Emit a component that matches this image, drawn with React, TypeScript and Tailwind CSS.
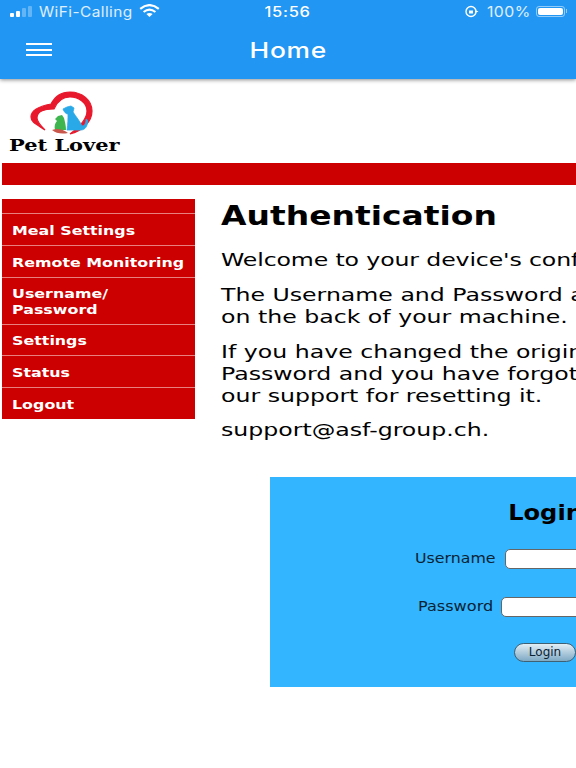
const sans = "font-['DejaVu_Sans',Verdana,sans-serif]";

const menu = [
  { lines: ["Meal Settings"], h: "h-[32px]" },
  { lines: ["Remote Monitoring"], h: "h-[32px]" },
  { lines: ["Username/", "Password"], h: "h-[47px]" },
  { lines: ["Settings"], h: "h-[31px]" },
  { lines: ["Status"], h: "h-[32px]" },
  { lines: ["Logout"], h: "h-[31px]" },
];

function Wifi() {
  return (
    <svg width="21" height="13" viewBox="0 0 21 13" className="ml-[15px] -mt-[1px]">
      <path d="M1.2 4.8 Q10.5 -2.6 19.8 4.8" fill="none" stroke="#fff" strokeWidth="2.2" />
      <path d="M4.6 8 Q10.5 3.2 16.4 8" fill="none" stroke="#fff" strokeWidth="2.2" />
      <path d="M7.4 10 Q10.5 7.8 13.6 10 L10.5 13 Z" fill="#fff" />
    </svg>
  );
}

function Logo() {
  return (
    <div className="relative w-[116px] h-[66px]">
      <svg width="116" height="52" viewBox="0 0 116 52" className="absolute left-0 top-0">
        {/* heart */}
        <path
          d="M37 40 C28 34 23 32 23 27 C23 20 32 16 43 14 C47 6 54 2 62 2 C74 2 84 10 84 21 C84 32 74 41 62 44 C70 38 79 30 79 21 C79 13 71 7 62 7 C54 7 49 12 46 19 C38 19 29 21 29 28 C29 32 33 36 37 40 Z"
          fill="#e8192c"
          stroke="#e8192c"
          strokeWidth="1.2"
        />
        {/* big dog */}
        <path
          d="M55 19 L59 17 L63 16 L66 18 L65 22 C68 27 72 31 74 36 C77 36 78 33 78 29 L79.5 30 C80 36 77 40 73 40 L59 40 C60 34 60 28 60 24 C58 24 56 22 55 19 Z"
          fill="#2aa9e8"
          stroke="#2aa9e8"
          strokeWidth="0.8"
        />
        {/* small dog */}
        <path
          d="M47 29 L50 26 L54 25 L56 28 C57 32 58 36 58 40 L47 40 C46 36 47 33 49 31 Z"
          fill="#3fb54f"
        />
        {/* paw */}
        <path d="M44 40 Q52 37 60 43 Q50 45 44 40 Z" fill="#c9574c" />
      </svg>
      <span className="absolute left-[1px] top-[45px] inline-block origin-left scale-x-[1.23] text-[17px] leading-[20px] font-bold whitespace-nowrap text-black font-['DejaVu_Serif',serif]">
        Pet Lover
      </span>
    </div>
  );
}

export default function App() {
  return (
    <div className={`w-[576px] h-[768px] overflow-hidden bg-white flex flex-col ${sans}`}>
      {/* App bar */}
      <header className="h-[79px] shrink-0 bg-[#2196f3] text-white shadow-[0_1px_4px_rgba(0,0,0,0.45)] relative z-10 flex flex-col">
        <div className="h-[22px] flex items-center justify-between pl-[10px] pr-[9px] text-[14px] font-['Inter',sans-serif]">
          <div className="flex items-center w-[198px]">
            <div className="flex items-end gap-[2px] mr-[7px] mt-[1px]">
              <span className="w-[4px] h-[4px] rounded-[1px] bg-white" />
              <span className="w-[4px] h-[6px] rounded-[1px] bg-white" />
              <span className="w-[4px] h-[9px] rounded-[1px] bg-white/30" />
              <span className="w-[4px] h-[11px] rounded-[1px] bg-white/30" />
            </div>
            <span className="inline-block origin-left scale-x-[1.1] tracking-[0.4px] text-white/85">WiFi-Calling</span>
            <Wifi />
          </div>
          <span className="inline-block scale-x-[1.18] font-medium tracking-[0.6px]">15:56</span>
          <div className="flex items-center justify-end w-[200px]">
            <svg width="15" height="13" viewBox="0 0 15 13" className="mr-[13px]">
              <circle cx="7" cy="6.5" r="5" fill="none" stroke="#fff" strokeWidth="1.4" />
              <rect x="5" y="5.5" width="4" height="3" fill="#fff" />
              <path d="M11 5 L14.5 6.5 L11 8 Z" fill="#fff" />
            </svg>
            <span className="inline-block origin-right scale-x-[1.13] tracking-[0.4px] text-white/85">100%</span>
            <div className="ml-[5px] w-[29px] h-[11px] rounded-[3px] border border-white/50 p-[1px]">
              <div className="h-full rounded-[2px] bg-white" />
            </div>
            <span className="ml-[1px] w-[1px] h-[4px] bg-white/50" />
          </div>
        </div>
        <div className="flex-1 relative flex items-center justify-center">
          <div className="absolute left-[26px] top-[21px] w-[26px] flex flex-col gap-[3.5px]">
            <span className="h-[2px] bg-white" />
            <span className="h-[2px] bg-white" />
            <span className="h-[2px] bg-white" />
          </div>
          <h1 className="inline-block scale-x-[1.2] text-[22px] font-medium tracking-[0.6px] font-['Inter',sans-serif]">Home</h1>
        </div>
      </header>

      {/* Logo */}
      <div className="h-[84px] shrink-0 pl-[8px] pt-[11px]">
        <Logo />
      </div>

      {/* Red bar */}
      <div className="ml-[2px] h-[22px] shrink-0 bg-[#cc0000]" />

      <div className="flex pt-[14px] pl-[2px]">
        {/* Sidebar */}
        <nav className="w-[193px] shrink-0 self-start flex flex-col bg-[#cc0000] text-white">
          <div className="h-[15px] border-b border-[#e88080]" />
          {menu.map((item, i) => (
            <a
              key={item.lines[0]}
              className={`${item.h} flex flex-col justify-center pl-[10px] pt-[2px] text-[12.5px] leading-[16px] font-bold whitespace-nowrap ${
                i < menu.length - 1 ? "border-b border-[#e88080]" : ""
              }`}
            >
              {item.lines.map((line) => (
                <span key={line} className="block origin-left scale-x-[1.27]">
                  {line}
                </span>
              ))}
            </a>
          ))}
        </nav>

        {/* Main */}
        <main className="ml-[26px] w-[355px] shrink-0 text-black">
          <h2 className="origin-left scale-x-[1.22] text-[27px] leading-[36px] font-bold -mt-[1px] whitespace-nowrap">Authentication</h2>
          <div className="mt-[15px] origin-left scale-x-[1.35] text-[17.5px] leading-[22px] whitespace-nowrap">
            <p className="tracking-[-0.1px]">Welcome to your device's configuration</p>
            <p className="mt-[13px]">
              The Username and Password are printed
              <br />
              on the back of your machine.
            </p>
            <p className="mt-[13px]">
              If you have changed the original
              <br />
              Password and you have forgotten, contact
              <br />
              our support for resetting it.
            </p>
            <p className="mt-[12px]">support@asf-group.ch.</p>
          </div>

          {/* Login panel */}
          <section className="mt-[36px] ml-[49px] w-[550px] h-[210px] bg-[#33b5ff] flex flex-col items-center">
            <h3 className="mt-[22px] inline-block scale-x-[1.15] text-[21px] leading-[28px] font-bold">Login</h3>
            <div className="mt-[21px] flex items-center gap-[10px]">
              <label className="w-[80px] origin-left scale-x-[1.09] text-[14.5px] text-[#0b2233] whitespace-nowrap">Username</label>
              <input className="w-[170px] h-[20px] rounded-[5px] bg-white border-[1.5px] border-[#666]" />
            </div>
            <div className="mt-[26px] flex items-center gap-[8px]">
              <label className="w-[75px] origin-left scale-x-[1.11] text-[14.5px] text-[#0b2233] whitespace-nowrap">Password</label>
              <input className="w-[171px] h-[20px] rounded-[5px] bg-white border-[1.5px] border-[#666]" />
            </div>
            <button className="mt-[25px] w-[62px] h-[19px] rounded-full border border-[#3f5f73] bg-gradient-to-b from-[#e3eef5] to-[#7fa9c4] text-[12px] leading-[16px] text-[#0b2233]">
              Login
            </button>
          </section>
        </main>
      </div>
    </div>
  );
}
